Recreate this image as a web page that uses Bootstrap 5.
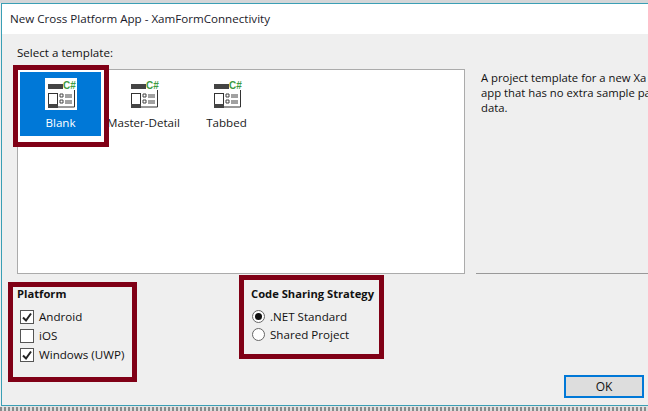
<!DOCTYPE html>
<html lang="en">
<head>
<meta charset="utf-8">
<title>New Cross Platform App</title>
<link href="https://cdn.jsdelivr.net/npm/bootstrap@5.3.0/dist/css/bootstrap.min.css" rel="stylesheet">
<style>
html,body{margin:0;background:#efefef}
body{width:648px;height:411px;overflow:hidden;font-family:"Open Sans","Noto Sans",sans-serif;font-size:11.6px;line-height:15px;color:#111}
.win{position:relative;width:648px;height:411px}
.topstrip{height:3px;background:#d4d6d8}
.frame{height:403px;border:solid #3a9fb5;border-width:1px 0 1px 1px;margin-left:1px;background:#efefef}
.titlebar{height:30px;background:#fff;padding-left:8px;line-height:30px;color:#1a1a2a}
.bottomdots{height:5px;background:linear-gradient(#e4e4e4 0 1px,transparent 1px),repeating-linear-gradient(90deg,#8a8a8a 0 2px,#dcdcdc 2px 4px)}
.lead-label{height:35px;padding:11px 0 0 15px}
.upper{height:205px}
.tplbox{width:448px;margin-left:15px;background:#fff;border:1px solid #ababab;padding:2px 2px;gap:2px}
.tpl{width:81px;height:64px;padding-top:6px;text-align:center;color:#1a1a1a;white-space:nowrap;flex:none}
.tpl-on{background:#0078d7;color:#fff}
.icbg{width:32px;height:32px;margin:0 auto 5px;display:block}
.tpl-on .icbg{background:#fff}
.desc{width:172px;margin-left:11px;padding:1px 0 0 5px;font-size:11.3px;white-space:nowrap;overflow:hidden;border-bottom:1px solid #999}
.lower{height:131px}
.grp-a{width:200px;padding:12px 0 0 15px}
.grp-b{padding:12px 0 0 49px;width:290px}
.grp-h{font-weight:700;font-size:11.2px;margin-bottom:6px;line-height:15px}
.opt{height:19px;margin-left:3px}
.optb{height:18px;margin-left:1px}
.cbx{width:14px;height:14px;border:1px solid #555;background:#fff;margin-right:5px;flex:none}
.rbx{width:13px;height:13px;border:1px solid #666;border-radius:50%;background:#fff;margin-right:5px;flex:none}
.rbx-on::after{content:"";width:7px;height:7px;border-radius:50%;background:#111}
.okbtn{width:80px;height:23px;margin:auto 4px 7px auto;padding:0;background:#ddd;border:2px solid #0078d7;border-radius:0;font-size:12px;line-height:19px;color:#111}
.note{position:absolute;border:5px solid #800016;pointer-events:none}
.note-a{left:13px;top:65px;width:96px;height:82px}
.note-b{left:8px;top:282px;width:129px;height:100px}
.note-c{left:239px;top:275px;width:145px;height:84px}
.csharp{font:700 10px "Liberation Sans",sans-serif;fill:#3f9b43}
</style>
</head>
<body>
<div class="win">
<div class="topstrip"></div>
<div class="frame">
<div class="titlebar">New Cross Platform App - XamFormConnectivity</div>
<div class="lead-label">Select a template:</div>
<div class="upper d-flex">
<div class="tplbox d-flex align-items-start">
<div class="tpl tpl-on"><svg class="icbg" viewBox="0 0 32 32"><rect x="3" y="6" width="15" height="5" fill="#444"/><path d="M29.5 12v17H3" fill="none" stroke="#333"/><rect x="3.5" y="15.5" width="9" height="14" fill="#fff" stroke="#333"/><rect x="3" y="26" width="10" height="4" fill="#444"/><path d="M15 16h3v3h-3zM20 17h7M20 19h7M15 22h3v3h-3zM20 23h7M20 25h7" fill="none" stroke="#444"/><text x="18" y="10.5" class="csharp">C#</text></svg>Blank</div>
<div class="tpl"><svg class="icbg" viewBox="0 0 32 32"><rect x="3" y="6" width="15" height="5" fill="#444"/><path d="M29.5 12v17H3" fill="none" stroke="#333"/><rect x="3.5" y="15.5" width="9" height="14" fill="#fff" stroke="#333"/><rect x="3" y="26" width="10" height="4" fill="#444"/><path d="M15 16h3v3h-3zM20 17h7M20 19h7M15 22h3v3h-3zM20 23h7M20 25h7" fill="none" stroke="#444"/><text x="18" y="10.5" class="csharp">C#</text></svg>Master-Detail</div>
<div class="tpl"><svg class="icbg" viewBox="0 0 32 32"><rect x="3" y="6" width="15" height="5" fill="#444"/><path d="M29.5 12v17H3" fill="none" stroke="#333"/><rect x="3.5" y="15.5" width="9" height="14" fill="#fff" stroke="#333"/><rect x="3" y="26" width="10" height="4" fill="#444"/><path d="M15 16h3v3h-3zM20 17h7M20 19h7M15 22h3v3h-3zM20 23h7M20 25h7" fill="none" stroke="#444"/><text x="18" y="10.5" class="csharp">C#</text></svg>Tabbed</div>
</div>
<div class="desc"><div>A project template for a new Xa</div><div>app that has no extra sample pa</div><div>data.</div></div>
</div>
<div class="lower d-flex">
<div class="grp-a">
<div class="grp-h">Platform</div>
<div class="opt d-flex align-items-center"><span class="cbx d-flex align-items-center justify-content-center"><svg width="12" height="12" viewBox="0 0 12 12"><path d="M2 6.5l3 3 5-7" fill="none" stroke="#222" stroke-width="2"/></svg></span>Android</div>
<div class="opt d-flex align-items-center"><span class="cbx"></span>iOS</div>
<div class="opt d-flex align-items-center"><span class="cbx d-flex align-items-center justify-content-center"><svg width="12" height="12" viewBox="0 0 12 12"><path d="M2 6.5l3 3 5-7" fill="none" stroke="#222" stroke-width="2"/></svg></span>Windows (UWP)</div>
</div>
<div class="grp-b">
<div class="grp-h">Code Sharing Strategy</div>
<div class="optb d-flex align-items-center"><span class="rbx rbx-on d-flex align-items-center justify-content-center"></span>.NET Standard</div>
<div class="optb d-flex align-items-center"><span class="rbx"></span>Shared Project</div>
</div>
<button type="button" class="btn okbtn">OK</button>
</div>
</div>
<div class="bottomdots"></div>
<div class="note note-a"></div>
<div class="note note-b"></div>
<div class="note note-c"></div>
</div>
</body>
</html>
